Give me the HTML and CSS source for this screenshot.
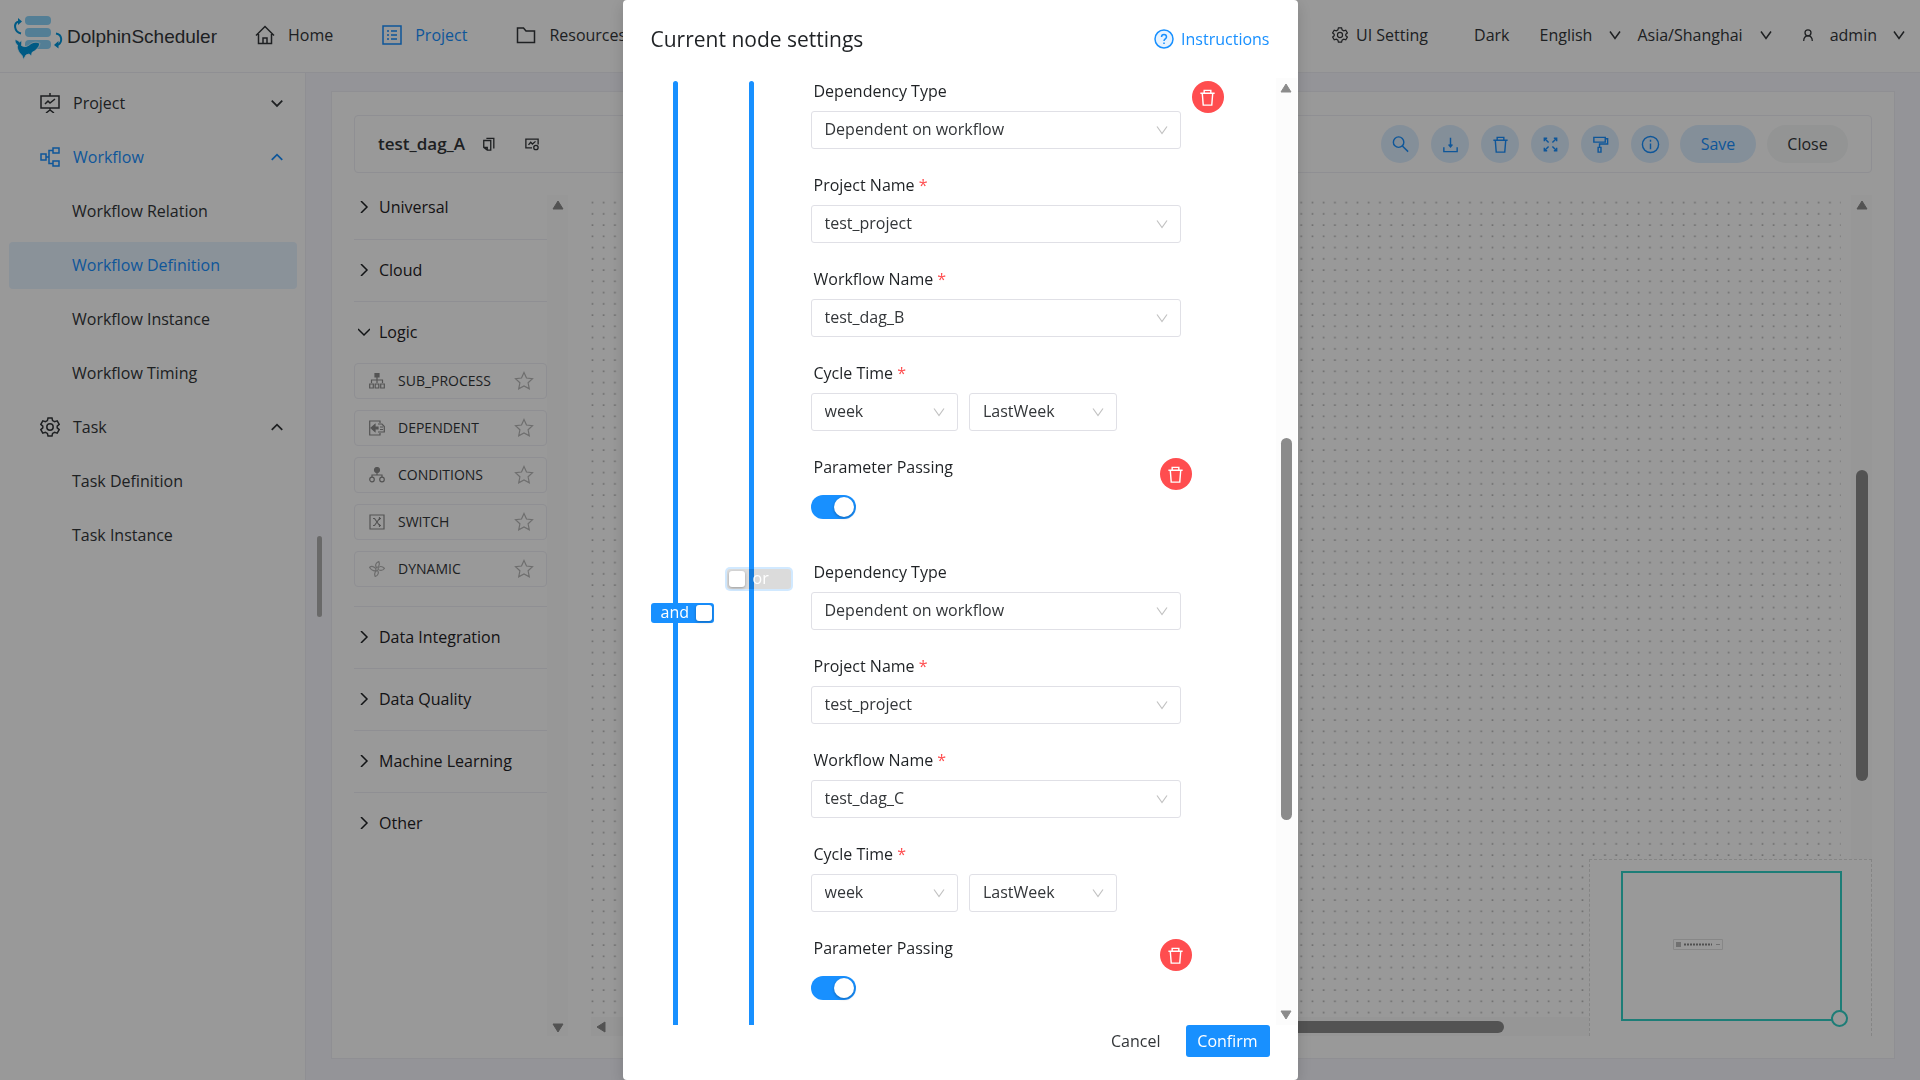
FILE: index.html
```html
<!DOCTYPE html>
<html lang="en">
<head>
    <meta charset="UTF-8">
    <title>DolphinScheduler</title>
    <link rel="stylesheet" href="styles.css">
</head>
<body>
    <svg class="sprite" aria-hidden="true">
        <symbol id="down" viewBox="0 0 12 12"><path d="M1 2.5 6 9.5 11 2.5"/></symbol>
        <symbol id="caret-down" viewBox="0 0 12 12"><path d="M1.5 4 6 8.5 10.500 4"/></symbol>
        <symbol id="caret-up" viewBox="0 0 12 12"><path d="M1.500 8.500 6 4 10.500 8.500"/></symbol>
        <symbol id="right" viewBox="0 0 12 12"><path d="M3 0 9 6 3 12"/></symbol>
        <symbol id="open" viewBox="0 0 12 12"><path d="M0 3 6 9 12 3"/></symbol>
        <symbol id="trash" viewBox="0 0 20 20"><path d="M2.500 5.500h15M6.500 5.500V2.500h7v3M4.500 5.500l1 12.500h9l1-12.500"/></symbol>
        <symbol id="gear" viewBox="0 0 20 20"><path d="M8 1h4l.6 2.600 2 1.100 2.600-.8 2 3.500-2 1.800v1.600l2 1.800-2 3.500-2.600-.8-2 1.100L12 19H8l-.6-2.600-2-1.100-2.600.8-2-3.500 2-1.800V9.200l-2-1.800 2-3.500 2.600.8 2-1.100z"/><circle cx="10" cy="10" r="3.200"/></symbol>
        <symbol id="star" viewBox="0 0 20 20"><path d="M10 1.500 12.500 7l6 .7-4.400 4.100 1.200 6L10 14.900 4.700 17.800l1.200-6L1.500 7.700l6-.7z"/></symbol>
        <symbol id="tri-up" viewBox="0 0 12 10"><path d="M6 1 11 9H1z"/></symbol>
        <symbol id="tri-down" viewBox="0 0 12 10"><path d="M6 9 11 1H1z"/></symbol>
        <symbol id="tri-left" viewBox="0 0 10 12"><path d="M1 6 9 1V11z"/></symbol>
    </svg>

    <header class="header">
        <a class="logo" href="#">
            <svg width="54" height="48" viewBox="0 0 54 48">
                <g fill="#8ad3f8">
                    <rect x="12" y="3" width="26" height="9" rx="4"/>
                    <rect x="12" y="15" width="26" height="9" rx="4"/>
                    <rect x="12" y="27" width="26" height="9" rx="4"/>
                </g>
                <g fill="none" stroke="#0096dd" stroke-width="2">
                    <path d="M8 20.500C1 19 0 9 6 8.500"/>
                    <path d="M43 20.500c6 1 7 8 2 11.500"/>
                </g>
                <path fill="#0096dd" d="M5 5 9 8.500 5 12zM45.500 28l-4.500 4 4.500 3.500z"/>
                <path fill="#0096dd" stroke="#fff" stroke-width=".8" d="M2 26.500c2.500.5 3.500 1.500 4.500 2.500l2-1.500c.5 2 0 3.500 0 5 3 2 6 1 9-1.500 3-2 6-2.500 9.500-.5-1 4-4 7-8 9l-.5 3.500-2.500-2-3 1-2.500 4.500-1.500-4C5 38.500 4 35.500 4.500 32c-2-1-2.500-3-2.500-5.500z"/>
            </svg>
            <span>DolphinScheduler</span>
        </a>
        <nav class="nav">
            <a href="#"><svg class="icon" viewBox="0 0 20 20"><path d="M1 10.500 10 1.500l9 9M3.500 9v9.500h13V9M8 18v-5h4v5"/></svg>Home</a>
            <a href="#" class="active"><svg class="icon" viewBox="0 0 20 20"><path d="M1 1h18v18H1zM5 6h2M5 10h2M5 14h2M9 6h6M9 10h6M9 14h6"/></svg>Project</a>
            <a href="#"><svg class="icon" viewBox="0 0 20 20"><path d="M1.500 3h6l2.500 3h8.500v11.500h-17z"/></svg>Resources</a>
        </nav>
        <div class="user-bar">
            <button class="setting"><svg class="icon small"><use href="#gear"/></svg>UI Setting</button>
            <button class="theme">Dark</button>
            <button>English<svg class="icon arrow"><use href="#down"/></svg></button>
            <button>Asia/Shanghai<svg class="icon arrow"><use href="#down"/></svg></button>
            <button class="user"><svg class="icon arrow" viewBox="0 0 12 14"><circle cx="6" cy="4.500" r="3.500"/><path d="M1 14c0-4 2-6 5-6s5 2 5 6"/></svg>admin<svg class="icon arrow"><use href="#down"/></svg></button>
        </div>
    </header>

    <div class="layout">
        <aside class="menu">
            <button class="menu-item"><svg class="icon" viewBox="0 0 20 20"><path d="M1 3h18v12H1zM10 0v3M10 15v2M6 20l4-3 4 3M5 11l3-3 2 2 5-4"/></svg>Project<svg class="icon arrow"><use href="#caret-down"/></svg></button>
            <button class="menu-item active"><svg class="icon" viewBox="0 0 20 20"><path d="M1 7h5v6H1zM13 1h6v5h-6zM13 14h6v5h-6zM6 10h3M13 3.500H9v13h4"/></svg>Workflow<svg class="icon arrow"><use href="#caret-up"/></svg></button>
            <a class="menu-item sub" href="#">Workflow Relation</a>
            <a class="menu-item sub active selected" href="#">Workflow Definition</a>
            <a class="menu-item sub" href="#">Workflow Instance</a>
            <a class="menu-item sub" href="#">Workflow Timing</a>
            <button class="menu-item"><svg class="icon"><use href="#gear"/></svg>Task<svg class="icon arrow"><use href="#caret-up"/></svg></button>
            <a class="menu-item sub" href="#">Task Definition</a>
            <a class="menu-item sub" href="#">Task Instance</a>
        </aside>

        <main class="content">
            <div class="splitter"></div>
            <div class="card">
                <div class="toolbar">
                    <span class="dag-name">test_dag_A</span>
                    <button class="plain" aria-label="Copy name"><svg class="icon" viewBox="0 0 16 16"><path d="M2 4h8v11H6l-4-3zM5 1.500h8.500V13M2 12h4v3"/></svg></button>
                    <button class="plain" aria-label="Workflow variables"><svg class="icon" viewBox="0 0 16 16"><path d="M8 12.500H1v-10h14v6M4 9l2.500-3 2 2L12 5"/><circle cx="12.500" cy="12" r="2.500"/></svg></button>
                    <div class="circles">
                        <button class="circle" aria-label="Search"><svg class="icon" viewBox="0 0 20 20"><circle cx="8" cy="7.500" r="5.500"/><path d="m12 11.500 6 6"/></svg></button>
                        <button class="circle" aria-label="Download"><svg class="icon" viewBox="0 0 20 20"><path d="M3 13v4.500h14V13M10 3v9M8 10l2 2.500 2-2.500"/></svg></button>
                        <button class="circle" aria-label="Delete"><svg class="icon"><use href="#trash"/></svg></button>
                        <button class="circle" aria-label="Fullscreen"><svg class="icon" viewBox="0 0 20 20"><path d="m4 4 4 4M16 4l-4 4M4 16l4-4M16 16l-4-4M3.500 6.500v-3h3M13.500 3.500h3v3M3.500 13.500v3h3M13.500 16.500h3v-3"/></svg></button>
                        <button class="circle" aria-label="Format"><svg class="icon" viewBox="0 0 20 20"><path d="M3 2.500h12v5H3zM15 4h2.500v5.500H9V13M7.500 13h3v5h-3z"/></svg></button>
                        <button class="circle" aria-label="Version info"><svg class="icon" viewBox="0 0 20 20"><circle cx="10" cy="10" r="8.500"/><path d="M10 9v6M10 5v2"/></svg></button>
                    </div>
                    <button class="save">Save</button>
                    <button class="close">Close</button>
                </div>

                <div class="dag">
                    <div class="task-panel">
                        <section><button class="group"><svg class="icon arrow"><use href="#right"/></svg>Universal</button></section>
                        <section><button class="group"><svg class="icon arrow"><use href="#right"/></svg>Cloud</button></section>
                        <section>
                            <button class="group"><svg class="icon arrow"><use href="#open"/></svg>Logic</button>
                            <ul class="tasks">
                                <li><svg class="icon small" viewBox="0 0 16 16"><path class="fill" d="M6 0h4v4H6z"/><path d="M8 4v6M2.500 10V7h11v3M.7 11h3.600v4H.7zM6.200 11h3.600v4H6.200zM11.700 11h3.600v4h-3.600z"/></svg>SUB_PROCESS<svg class="icon star"><use href="#star"/></svg></li>
                                <li><svg class="icon small" viewBox="0 0 16 16"><path d="M11 3V1H.7v14H11v-2M9 4h4l2.300 2.500V12H9M11 7h3M11 9.500h3"/><path class="fill" d="m2 8 4-3.500v2.500h3v2H6v2.500z"/></svg>DEPENDENT<svg class="icon star"><use href="#star"/></svg></li>
                                <li><svg class="icon small" viewBox="0 0 16 16"><circle class="fill" cx="8" cy="3" r="2.500"/><path d="M8 4v4M3 10V8h10v2"/><circle cx="3" cy="12.500" r="2.300"/><circle cx="13" cy="12.500" r="2.300"/></svg>CONDITIONS<svg class="icon star"><use href="#star"/></svg></li>
                                <li><svg class="icon small" viewBox="0 0 16 16"><path d="M1 1h14v14H1zM4 4.500h1.500l5 7H12M4 11.500h1.500l5-7H12M10.500 3v3M10.500 10v3"/></svg>SWITCH<svg class="icon star"><use href="#star"/></svg></li>
                                <li class="light"><svg class="icon small" viewBox="0 0 16 16"><path d="M7.800 6.800C5.500 4.500 7 1.500 9.800.5c1 2.500.5 5-2 6.300zM9 8c.5-3 4-3.500 6.500-.5-2 2.500-5 2.500-6.500.5zM8.200 9.200c2.300 2.300.8 5.300-2 6.300-1-2.500-.5-5 2-6.300zM7 8c-.5 3-4 2-6.500-1.500C2.500 4.500 5.500 5.500 7 8z"/></svg>DYNAMIC<svg class="icon star"><use href="#star"/></svg></li>
                            </ul>
                        </section>
                        <section><button class="group"><svg class="icon arrow"><use href="#right"/></svg>Data Integration</button></section>
                        <section><button class="group"><svg class="icon arrow"><use href="#right"/></svg>Data Quality</button></section>
                        <section><button class="group"><svg class="icon arrow"><use href="#right"/></svg>Machine Learning</button></section>
                        <section><button class="group"><svg class="icon arrow"><use href="#right"/></svg>Other</button></section>
                    </div>
                    <div class="scrollbar">
                        <svg class="tri"><use href="#tri-up"/></svg>
                        <svg class="tri"><use href="#tri-down"/></svg>
                    </div>
                    <div class="canvas">
                        <svg class="dots">
                            <defs>
                                <pattern id="dot" width="9" height="9" patternUnits="userSpaceOnUse" patternTransform="scale(1.25)"><rect x=".5" y="5.500" width="1.300" height="1.200" fill="#b0b0b0"/></pattern>
                            </defs>
                            <rect width="100%" height="100%" fill="url(#dot)"/>
                        </svg>
                        <div class="scrollbar canvas-y">
                            <svg class="tri"><use href="#tri-up"/></svg>
                            <div class="thumb"></div>
                        </div>
                        <div class="canvas-x">
                            <svg class="tri"><use href="#tri-left"/></svg>
                            <div class="thumb"></div>
                        </div>
                        <div class="minimap">
                            <div class="viewport"></div>
                            <svg class="mini-node" width="50" height="11"><path fill="none" stroke="#e2e2e2" d="M.5.5h49v10H.5z"/><path fill="#bbb" d="M3 3h5v5H3zM43 5h4v1h-4z"/><path stroke="#888" stroke-width="2" stroke-dasharray="2 1" d="M11 5.500h28"/></svg>
                        </div>
                    </div>
                </div>
            </div>
        </main>
    </div>

    <div class="mask">
        <div class="modal" role="dialog" aria-labelledby="modal-title">
            <div class="modal-header">
                <h2 id="modal-title">Current node settings</h2>
                <a href="#"><svg class="icon" viewBox="0 0 20 20"><circle cx="10" cy="10" r="9" fill="#e7f3ff"/><path d="M7.500 8c0-3.500 5-3.500 5 0 0 1.800-2.500 2-2.500 4M10 13.500v1.500"/></svg>Instructions</a>
            </div>
            <div class="modal-body">
                <div class="relation">
                    <label class="relation-switch and"><input type="checkbox" role="switch" checked><span>and</span></label>
                </div>
                <div class="relation second">
                    <label class="relation-switch or"><input type="checkbox" role="switch"><span>or</span></label>
                </div>
                <div class="depend-list">
                    <div class="depend-item">
                        <div class="field">
                            <label for="type-1">Dependency Type</label>
                            <div class="select"><select id="type-1"><option>Dependent on workflow</option></select><svg class="icon arrow"><use href="#down"/></svg></div>
                        </div>
                        <div class="field">
                            <label for="project-1">Project Name <b>*</b></label>
                            <div class="select"><select id="project-1"><option>test_project</option></select><svg class="icon arrow"><use href="#down"/></svg></div>
                        </div>
                        <div class="field">
                            <label for="workflow-1">Workflow Name <b>*</b></label>
                            <div class="select"><select id="workflow-1"><option>test_dag_B</option></select><svg class="icon arrow"><use href="#down"/></svg></div>
                        </div>
                        <div class="field">
                            <label for="cycle-1">Cycle Time <b>*</b></label>
                            <div class="cycle">
                                <div class="select"><select id="cycle-1"><option>week</option></select><svg class="icon arrow"><use href="#down"/></svg></div>
                                <div class="select"><select aria-label="Cycle date"><option>LastWeek</option></select><svg class="icon arrow"><use href="#down"/></svg></div>
                            </div>
                        </div>
                        <div class="passing">
                            <div class="field">
                                <label for="passing-1">Parameter Passing</label>
                                <input id="passing-1" class="toggle" type="checkbox" role="switch" checked>
                            </div>
                            <button class="remove" aria-label="Delete"><svg class="icon"><use href="#trash"/></svg></button>
                        </div>
                    </div>
                    <div class="depend-item">
                        <div class="field">
                            <label for="type-2">Dependency Type</label>
                            <div class="select"><select id="type-2"><option>Dependent on workflow</option></select><svg class="icon arrow"><use href="#down"/></svg></div>
                        </div>
                        <div class="field">
                            <label for="project-2">Project Name <b>*</b></label>
                            <div class="select"><select id="project-2"><option>test_project</option></select><svg class="icon arrow"><use href="#down"/></svg></div>
                        </div>
                        <div class="field">
                            <label for="workflow-2">Workflow Name <b>*</b></label>
                            <div class="select"><select id="workflow-2"><option>test_dag_C</option></select><svg class="icon arrow"><use href="#down"/></svg></div>
                        </div>
                        <div class="field">
                            <label for="cycle-2">Cycle Time <b>*</b></label>
                            <div class="cycle">
                                <div class="select"><select id="cycle-2"><option>week</option></select><svg class="icon arrow"><use href="#down"/></svg></div>
                                <div class="select"><select aria-label="Cycle date"><option>LastWeek</option></select><svg class="icon arrow"><use href="#down"/></svg></div>
                            </div>
                        </div>
                        <div class="passing">
                            <div class="field">
                                <label for="passing-2">Parameter Passing</label>
                                <input id="passing-2" class="toggle" type="checkbox" role="switch" checked>
                            </div>
                            <button class="remove" aria-label="Delete"><svg class="icon"><use href="#trash"/></svg></button>
                        </div>
                    </div>
                </div>
                <button class="remove group-remove" aria-label="Delete group"><svg class="icon"><use href="#trash"/></svg></button>
                <div class="scrollbar modal-scroll">
                    <svg class="tri"><use href="#tri-up"/></svg>
                    <div class="thumb"></div>
                    <svg class="tri"><use href="#tri-down"/></svg>
                </div>
            </div>
            <div class="modal-footer">
                <button class="cancel">Cancel</button>
                <button class="confirm">Confirm</button>
            </div>
        </div>
    </div>
</body>
</html>
```
FILE: styles.css
```css
* {
    box-sizing: border-box;
}
body {
    margin: 0;
    height: 100vh;
    display: flex;
    flex-direction: column;
    overflow: hidden;
    font-family: "Open Sans", "Noto Sans", sans-serif;
    font-size: 16px;
    line-height: 24px;
    color: #333639;
    background-color: #fff;
}
a {
    color: inherit;
    text-decoration: none;
}
button {
    font: inherit;
    color: inherit;
    background: none;
    border: none;
    padding: 0;
    cursor: pointer;
}
.sprite {
    position: absolute;
    width: 0;
    height: 0;
}
.icon {
    width: 20px;
    height: 20px;
    flex: none;
    fill: none;
    stroke: currentColor;
    stroke-width: 1.5;
}
.icon.small {
    width: 16px;
    height: 16px;
}
.icon.arrow {
    width: 12px;
    height: 12px;
}
.icon .fill {
    fill: currentColor;
}
.active {
    color: #1890ff;
}

/* header */
.header {
    display: flex;
    align-items: center;
    height: 73px;
    padding: 0 15px 3px 13px;
    border-bottom: 1px solid #efeff5;
}
.logo {
    display: flex;
    align-items: center;
    width: 242px;
    padding-top: 4px;
    font-family: "Liberation Sans", Arial, sans-serif;
    font-size: 19px;
    white-space: nowrap;
}
.nav {
    display: flex;
    gap: 49px;
}
.nav a {
    display: flex;
    align-items: center;
    gap: 13px;
}
.user-bar {
    display: flex;
    align-items: center;
    margin-left: auto;
    gap: 16px;
}
.user-bar button {
    display: flex;
    align-items: center;
    gap: 17px;
}
.user-bar .setting {
    gap: 8px;
    margin-right: 30px;
}
.user-bar .theme {
    margin-right: 14px;
}
.user-bar .user {
    gap: 16px;
    margin-left: 14px;
}

/* side menu */
.layout {
    flex: 1;
    display: flex;
    min-height: 0;
}
.menu {
    width: 306px;
    flex: none;
    border-right: 1px solid #efeff5;
}
.menu-item {
    display: flex;
    align-items: center;
    gap: 13px;
    width: 288px;
    height: 47px;
    margin: 7px 9px 0;
    padding: 0 13px 2px 31px;
    border-radius: 4px;
}
.menu-item .arrow {
    margin-left: auto;
    width: 14px;
    height: 14px;
}
.menu-item.sub {
    padding-left: 63px;
}
.menu-item.selected {
    background-color: #e7f3ff;
}

/* content */
.content {
    position: relative;
    flex: 1;
    min-width: 0;
    display: flex;
    padding: 18px 25px 21px;
    background-color: #f7f7fd;
}
.splitter {
    position: absolute;
    left: 11px;
    top: 463px;
    width: 5px;
    height: 81px;
    border-radius: 3px;
    background-color: #b0b0b0;
}
.card {
    flex: 1;
    min-width: 0;
    display: flex;
    flex-direction: column;
    gap: 22px;
    padding: 23px 22px 22px;
    border: 1px solid #efeff5;
    background-color: #fff;
}
.toolbar {
    display: flex;
    align-items: center;
    gap: 11px;
    height: 58px;
    padding: 0 23px;
    border: 1px solid #efeff5;
    border-radius: 4px;
}
.dag-name {
    font-size: 17px;
    font-weight: 600;
    margin-right: 6px;
}
.plain {
    display: flex;
    margin-right: 18px;
}
.plain .icon {
    width: 14px;
    height: 14px;
}
.circles {
    display: flex;
    gap: 12px;
    margin-left: auto;
}
.circle {
    display: flex;
    align-items: center;
    justify-content: center;
    width: 38px;
    height: 38px;
    border-radius: 50%;
    color: #1890ff;
    background-color: #dceeff;
}
.circle .icon {
    width: 19px;
    height: 19px;
}
.save,
.close {
    width: 76px;
    height: 38px;
    border-radius: 19px;
    color: #1890ff;
    background-color: #dceeff;
}
.close {
    width: 81px;
    color: #333639;
    background-color: #f5f7f7;
}

/* task list */
.dag {
    flex: 1;
    display: flex;
    min-height: 0;
}
.task-panel {
    width: 193px;
    flex: none;
}
.task-panel section {
    padding: 18px 0 19px;
    border-top: 1px solid #efeff5;
}
.task-panel section:first-child {
    padding: 0 0 20px;
    border-top: none;
}
.group {
    display: flex;
    align-items: center;
    gap: 9px;
    padding-left: 4px;
    color: #1f2225;
}
.tasks {
    display: grid;
    gap: 11px;
    margin: 19px 0 0;
    padding: 0;
    list-style: none;
}
.tasks li {
    display: flex;
    align-items: center;
    gap: 13px;
    height: 36px;
    padding: 0 12px 0 14px;
    border: 1px solid #efeff5;
    border-radius: 4px;
    font-size: 14px;
}
.tasks .icon {
    color: #8c8c8c;
    stroke-width: 1.2;
}
.tasks .light .small {
    color: #b4b4b4;
}
.tasks .star {
    margin-left: auto;
    color: #b8b8b8;
}
.scrollbar {
    display: flex;
    flex-direction: column;
    align-items: center;
    justify-content: space-between;
    width: 21px;
    flex: none;
    padding: 5px 0 3px;
    background-color: #fcfcfc;
}
.tri {
    width: 12px;
    height: 10px;
    flex: none;
    fill: #8b8b8b;
    stroke: #8b8b8b;
    stroke-linejoin: round;
}
.thumb {
    border-radius: 6px;
    background-color: #8b8b8b;
}

/* canvas */
.canvas {
    position: relative;
    flex: 1;
    margin-left: 23px;
    overflow: hidden;
}
.dots {
    display: block;
    width: calc(100% - 31px);
    height: calc(100% - 19px);
}
.canvas-y {
    position: absolute;
    top: 0;
    right: 0;
    bottom: 0;
    justify-content: flex-start;
}
.canvas-y .thumb {
    width: 12px;
    height: 311px;
    margin-top: 260px;
}
.canvas-x {
    position: absolute;
    left: 0;
    right: 0;
    bottom: 0;
    display: flex;
    align-items: center;
    justify-content: space-between;
    height: 19px;
    padding: 0 368px 0 5px;
    background-color: #fafafa;
}
.canvas-x .tri {
    width: 10px;
    height: 12px;
}
.canvas-x .thumb {
    width: 480px;
    height: 12px;
}
.minimap {
    position: absolute;
    right: 0;
    bottom: 0;
    width: 283px;
    height: 177px;
    border: 1px dashed #dedede;
    border-bottom: none;
    background-color: #fff;
}
.viewport {
    position: absolute;
    left: 31px;
    top: 11px;
    width: 221px;
    height: 150px;
    border: 2px solid #31d0c6;
}
.viewport::after {
    content: "";
    position: absolute;
    right: -8px;
    bottom: -8px;
    width: 13px;
    height: 13px;
    border: 2px solid #31d0c6;
    border-radius: 50%;
    background-color: #fff;
}
.mini-node {
    position: absolute;
    left: 83px;
    top: 79px;
}

/* modal */
.mask {
    position: fixed;
    inset: 0;
    display: flex;
    justify-content: center;
    background-color: rgba(0, 0, 0, 0.4);
}
.modal {
    display: flex;
    flex-direction: column;
    width: 675px;
    max-width: 100%;
    height: 100%;
    padding: 0 0 23px 28px;
    border-radius: 4px;
    background-color: #fff;
    box-shadow: 0 4px 16px rgba(0, 0, 0, 0.16);
}
.modal-header {
    display: flex;
    align-items: center;
    justify-content: space-between;
    height: 78px;
    flex: none;
    padding-right: 28px;
}
.modal-header h2 {
    margin: 0;
    font-size: 21px;
    font-weight: 400;
    color: #1f2225;
}
.modal-header a {
    display: flex;
    align-items: center;
    gap: 7px;
    color: #1890ff;
}
.modal-body {
    flex: 1;
    min-height: 0;
    display: flex;
    overflow: hidden;
}
.relation {
    position: relative;
    width: 76px;
    flex: none;
    margin-top: 3px;
}
.relation.second {
    width: 84px;
}
.relation::before {
    content: "";
    position: absolute;
    left: 22px;
    top: 0;
    bottom: 0;
    width: 5px;
    border-radius: 3px 3px 0 0;
    background-color: #1890ff;
}
.relation-switch {
    position: absolute;
    left: 0;
    top: 522px;
    width: 63px;
    height: 20px;
    border-radius: 3px;
    line-height: 18px;
    color: #fff;
    background-color: #1890ff;
}
.relation-switch.or {
    top: 488px;
    width: 64px;
    background-color: rgba(0, 0, 0, 0.14);
    box-shadow: 0 0 0 2px rgba(24, 144, 255, 0.2);
}
.relation-switch input {
    appearance: none;
    position: absolute;
    right: 2px;
    top: 2px;
    width: 16px;
    height: 16px;
    margin: 0;
    border-radius: 3px;
    background-color: #fff;
    box-shadow: 0 1px 3px rgba(0, 0, 0, 0.3);
}
.relation-switch.or input {
    left: 2px;
}
.relation-switch span {
    position: absolute;
    left: 10px;
}
.relation-switch.or span {
    left: 26px;
}
.depend-list {
    width: 381px;
    padding-top: 1px;
}
.depend-item {
    margin-bottom: 33px;
}
.field {
    width: 370px;
    margin-bottom: 24px;
}
.field label {
    display: block;
    margin-bottom: 8px;
    padding-left: 3px;
    color: #1f2225;
}
.field b {
    font-weight: 400;
    color: #ff4d4f;
}
.select {
    position: relative;
    flex: 1;
}
.select select {
    display: block;
    appearance: none;
    width: 100%;
    height: 38px;
    padding: 0 30px 2px 13px;
    border: 1px solid #e0e0e6;
    border-radius: 3px;
    font: inherit;
    color: #333639;
    background-color: #fff;
}
.select .arrow {
    position: absolute;
    right: 13px;
    top: 13px;
    color: #c2c2c2;
    stroke-width: 1.2;
    pointer-events: none;
}
.cycle {
    display: flex;
    gap: 11px;
    width: 306px;
}
.passing {
    display: flex;
    justify-content: space-between;
}
.passing .field {
    width: auto;
    height: 72px;
    margin: 0;
}
.toggle {
    appearance: none;
    display: block;
    width: 45px;
    height: 24px;
    margin: 16px 0 0;
    padding: 2px;
    border-radius: 12px;
    background-color: #1890ff;
}
.toggle::after {
    content: "";
    display: block;
    width: 20px;
    height: 20px;
    margin-left: auto;
    border-radius: 50%;
    background-color: #fff;
    box-shadow: 0 1px 3px rgba(0, 0, 0, 0.3);
}
.remove {
    display: flex;
    align-items: center;
    justify-content: center;
    width: 32px;
    height: 32px;
    flex: none;
    margin-top: 3px;
    border-radius: 50%;
    color: #fff;
    background-color: #ff4d4f;
}
.remove .icon {
    width: 19px;
    height: 19px;
}
.modal-scroll {
    margin-left: auto;
    margin-right: 1px;
    padding: 5px 0;
}
.modal-scroll .thumb {
    width: 11px;
    height: 382px;
    margin-top: 345px;
    margin-bottom: auto;
}
.modal-footer {
    display: flex;
    align-items: center;
    justify-content: flex-end;
    gap: 25px;
    padding-right: 28px;
}
.confirm {
    width: 84px;
    height: 32px;
    border-radius: 3px;
    color: #fff;
    background-color: #1890ff;
}
```
